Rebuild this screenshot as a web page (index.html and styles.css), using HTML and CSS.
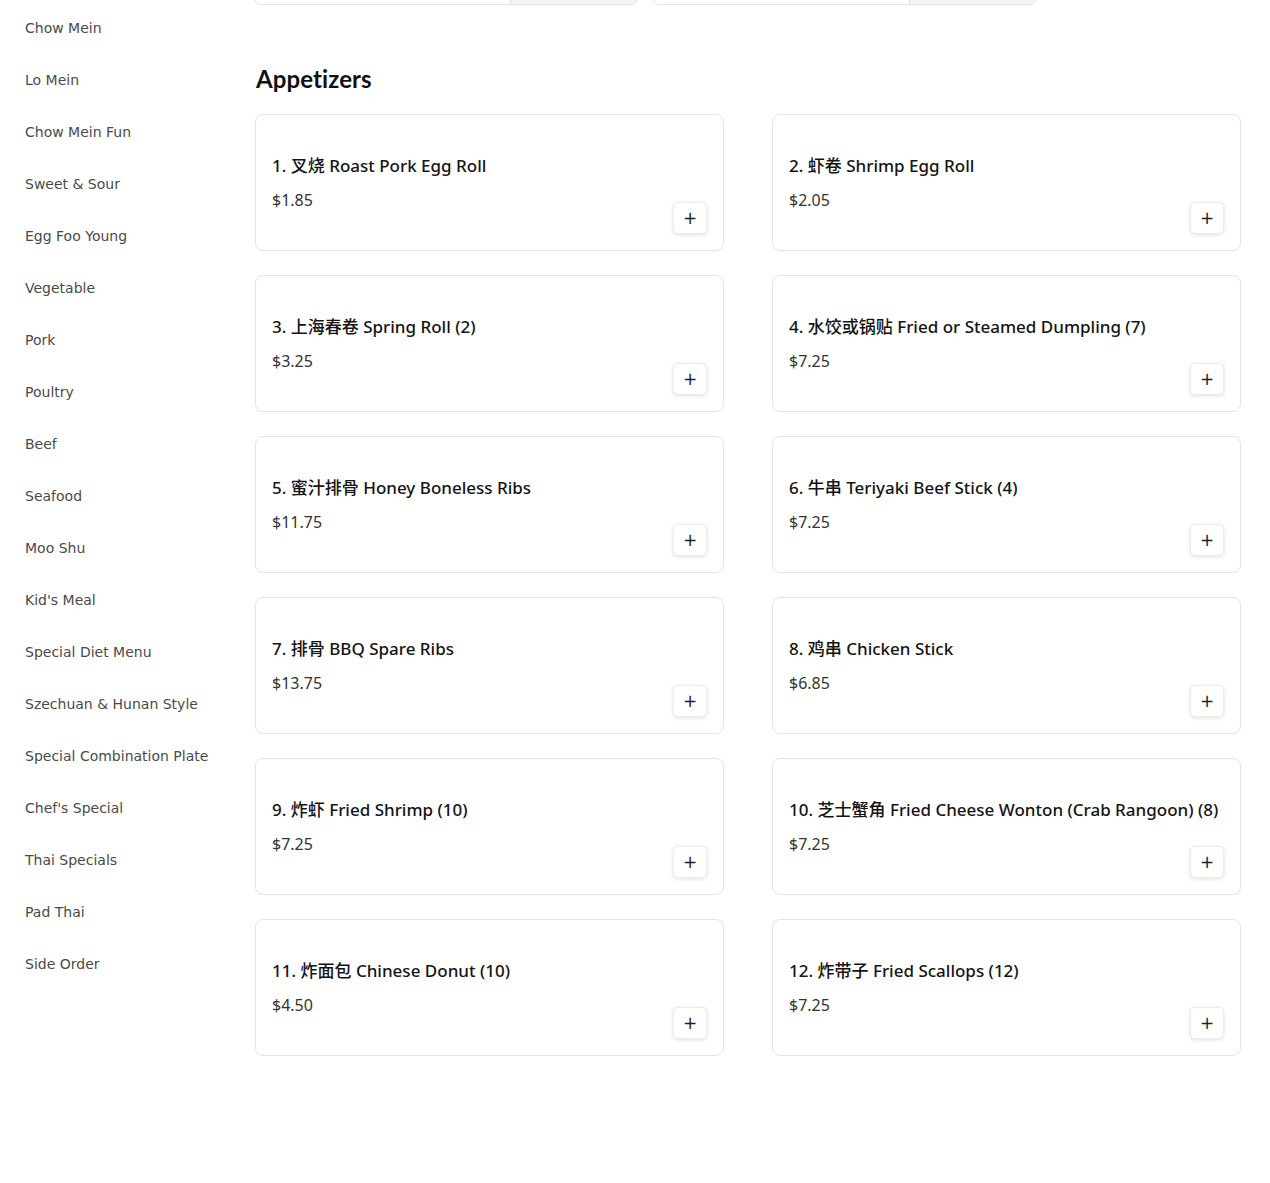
FILE: index.html
```html
<!DOCTYPE html>
<html lang="en">
<head>
<meta charset="utf-8">
<title>Menu</title>
<link rel="stylesheet" href="styles.css">
</head>
<body>
<div class="layout">
  <nav class="sidebar">
    <a class="cat">Chow Mein</a>
    <a class="cat">Lo Mein</a>
    <a class="cat">Chow Mein Fun</a>
    <a class="cat">Sweet &amp; Sour</a>
    <a class="cat">Egg Foo Young</a>
    <a class="cat">Vegetable</a>
    <a class="cat">Pork</a>
    <a class="cat">Poultry</a>
    <a class="cat">Beef</a>
    <a class="cat">Seafood</a>
    <a class="cat">Moo Shu</a>
    <a class="cat">Kid's Meal</a>
    <a class="cat">Special Diet Menu</a>
    <a class="cat">Szechuan &amp; Hunan Style</a>
    <a class="cat">Special Combination Plate</a>
    <a class="cat">Chef's Special</a>
    <a class="cat">Thai Specials</a>
    <a class="cat">Pad Thai</a>
    <a class="cat">Side Order</a>
  </nav>
  <main class="main">
    <div class="toprow">
      <div class="stub"><div class="stub-l"></div><div class="stub-r"></div></div>
      <div class="stub"><div class="stub-l"></div><div class="stub-r"></div></div>
    </div>
    <h2 class="section-title">Appetizers</h2>
    <div class="grid">
      <div class="card"><div class="info"><div class="name">1. 叉烧 Roast Pork Egg Roll</div><div class="price">$1.85</div></div><button class="add">+</button></div>
      <div class="card"><div class="info"><div class="name">2. 虾卷 Shrimp Egg Roll</div><div class="price">$2.05</div></div><button class="add">+</button></div>
      <div class="card"><div class="info"><div class="name">3. 上海春卷 Spring Roll (2)</div><div class="price">$3.25</div></div><button class="add">+</button></div>
      <div class="card"><div class="info"><div class="name">4. 水饺或锅贴 Fried or Steamed Dumpling (7)</div><div class="price">$7.25</div></div><button class="add">+</button></div>
      <div class="card"><div class="info"><div class="name">5. 蜜汁排骨 Honey Boneless Ribs</div><div class="price">$11.75</div></div><button class="add">+</button></div>
      <div class="card"><div class="info"><div class="name">6. 牛串 Teriyaki Beef Stick (4)</div><div class="price">$7.25</div></div><button class="add">+</button></div>
      <div class="card"><div class="info"><div class="name">7. 排骨 BBQ Spare Ribs</div><div class="price">$13.75</div></div><button class="add">+</button></div>
      <div class="card"><div class="info"><div class="name">8. 鸡串 Chicken Stick</div><div class="price">$6.85</div></div><button class="add">+</button></div>
      <div class="card"><div class="info"><div class="name">9. 炸虾 Fried Shrimp (10)</div><div class="price">$7.25</div></div><button class="add">+</button></div>
      <div class="card"><div class="info"><div class="name">10. 芝士蟹角 Fried Cheese Wonton (Crab Rangoon) (8)</div><div class="price">$7.25</div></div><button class="add">+</button></div>
      <div class="card"><div class="info"><div class="name">11. 炸面包 Chinese Donut (10)</div><div class="price">$4.50</div></div><button class="add">+</button></div>
      <div class="card"><div class="info"><div class="name">12. 炸带子 Fried Scallops (12)</div><div class="price">$7.25</div></div><button class="add">+</button></div>
    </div>
  </main>
</div>
</body>
</html>
```
FILE: styles.css
```css
* { box-sizing: border-box; }
html, body { margin: 0; padding: 0; background: #fff; }
body { font-family: "DejaVu Sans", "Noto Sans CJK SC", sans-serif; color: #222; }

.layout {
  display: flex;
  align-items: flex-start;
  padding: 0 29px 0 0;
}

.sidebar {
  width: 255px;
  flex: none;
  display: flex;
  flex-direction: column;
  padding: 20px 0 0 25px;
  gap: 35px;
}
.cat {
  font-size: 14px;
  line-height: 17px;
  color: #4a4a4a;
  white-space: nowrap;
}

.main {
  flex: 1;
  min-width: 0;
  padding-bottom: 127px;
}

.toprow {
  display: flex;
  gap: 17px;
  height: 5px;
}
.stub {
  width: 382px;
  height: 5px;
  display: flex;
  border: 1px solid #e3e3e3;
  border-top: none;
  border-radius: 0 0 8px 8px;
  overflow: hidden;
}
.stub-l { width: 255px; background: #fff; border-right: 1px solid #e3e3e3; }
.stub-r { flex: 1; background: #f4f4f4; }

.section-title {
  margin: 57px 0 18px 1px;
  font-family: "Lato", "Noto Sans CJK SC", sans-serif;
  font-size: 24px;
  line-height: 34px;
  font-weight: 700;
  color: #111;
  letter-spacing: 0.1px;
}

.grid {
  display: grid;
  grid-template-columns: 469px 469px;
  column-gap: 48px;
  row-gap: 24px;
}

.card {
  height: 137px;
  border: 1px solid #e4e4e4;
  border-radius: 8px;
  padding: 39px 16px 16px 16px;
  display: flex;
  justify-content: space-between;
  align-items: flex-end;
  gap: 8px;
  font-family: "Noto Sans", "Noto Sans CJK SC", sans-serif;
}
.info {
  flex: 1;
  min-width: 0;
  align-self: flex-start;
  display: flex;
  flex-direction: column;
  gap: 10px;
}
.name {
  font-size: 17px;
  line-height: 24px;
  font-weight: 500;
  color: #141414;
  white-space: nowrap;
}
.price {
  font-size: 16px;
  line-height: 24px;
  color: #333;
}
.add {
  flex: none;
  width: 34px;
  height: 32px;
  border: 1px solid #ececec;
  border-radius: 5px;
  background: #fff;
  box-shadow: 0 1px 4px rgba(0,0,0,0.12);
  font-family: "DejaVu Sans", sans-serif;
  font-size: 17px;
  line-height: 1;
  color: #222;
  padding: 0;
}
```
